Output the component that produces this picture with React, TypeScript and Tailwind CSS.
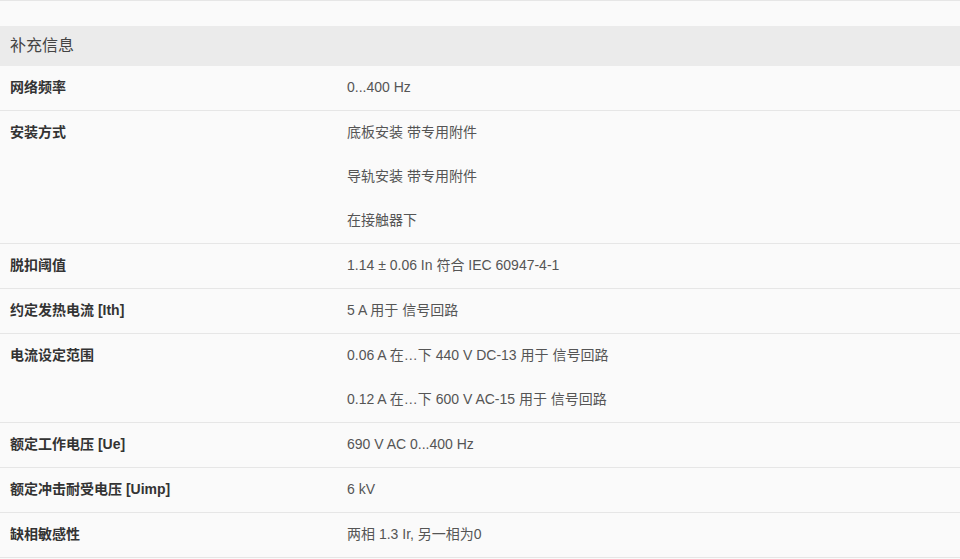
const rows: { label: string; values: string[] }[] = [
  { label: "网络频率", values: ["0...400 Hz"] },
  { label: "安装方式", values: ["底板安装 带专用附件", "导轨安装 带专用附件", "在接触器下"] },
  { label: "脱扣阈值", values: ["1.14 ± 0.06 In 符合 IEC 60947-4-1"] },
  { label: "约定发热电流 [Ith]", values: ["5 A 用于 信号回路"] },
  {
    label: "电流设定范围",
    values: ["0.06 A 在…下 440 V DC-13 用于 信号回路", "0.12 A 在…下 600 V AC-15 用于 信号回路"],
  },
  { label: "额定工作电压 [Ue]", values: ["690 V AC 0...400 Hz"] },
  { label: "额定冲击耐受电压 [Uimp]", values: ["6 kV"] },
  { label: "缺相敏感性", values: ["两相 1.3 Ir, 另一相为0"] },
];

export default function App() {
  return (
    <div
      className="min-h-[559px] w-[960px] overflow-hidden bg-[#fafafa] text-[14px]"
      style={{ fontFamily: '"Liberation Sans", Arial, "Noto Sans CJK SC", sans-serif' }}
    >
      <div className="h-[26px] border-t border-[#e6e6e6]" />
      <div className="flex h-[40px] items-center bg-[#ebebeb] px-[10px] text-[16px] text-[#444]">补充信息</div>
      {rows.map((row) => (
        <div key={row.label} className="flex border-b border-[#e6e6e6]">
          <div className="w-[347px] shrink-0 pl-[10px] pb-[1px] font-bold leading-[43px] text-[#333]">{row.label}</div>
          <div className="flex flex-col">
            {row.values.map((v) => (
              <div key={v} className="pb-[1px] leading-[43px] text-[#555]">
                {v}
              </div>
            ))}
          </div>
        </div>
      ))}
    </div>
  );
}
